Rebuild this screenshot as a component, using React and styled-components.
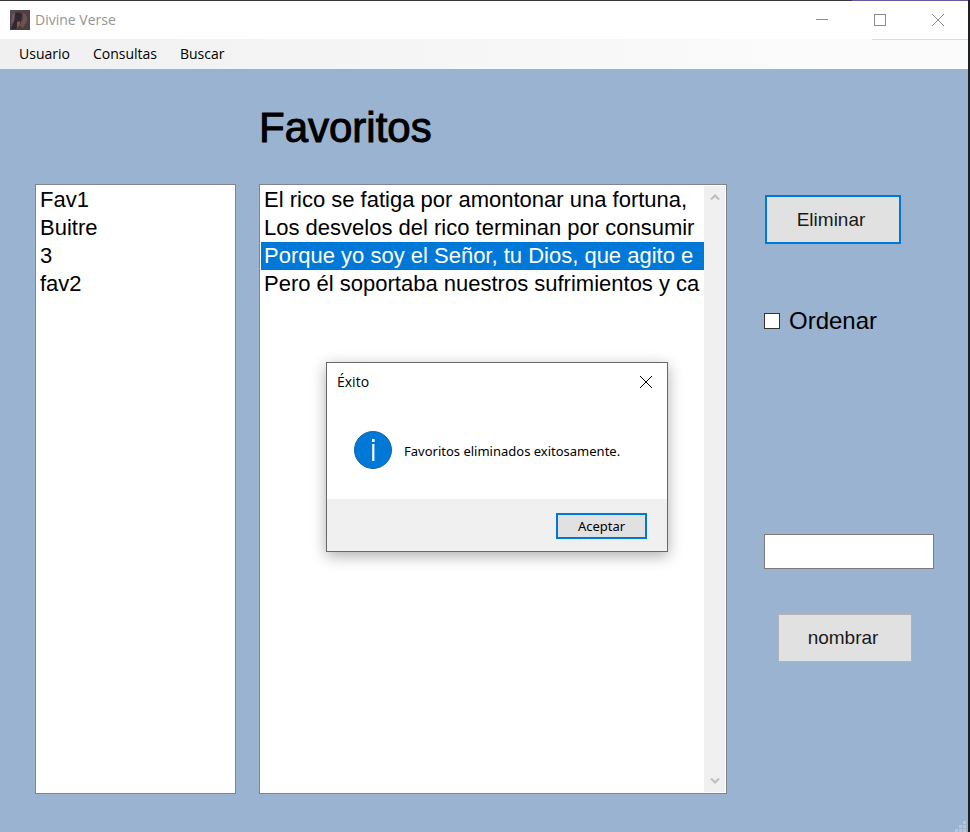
import React from "react";
import styled, { createGlobalStyle } from "styled-components";

const GlobalStyle = createGlobalStyle`
  *, *::before, *::after { box-sizing: border-box; }
  body { margin: 0; background: #1f2023; }
  button, input { font: inherit; color: inherit; }
`;

const sans = `"Liberation Sans", Arial, sans-serif`;
const ui = `"Open Sans", "Segoe UI", sans-serif`;
const uiWide = `"Noto Sans", "Segoe UI", sans-serif`;

const Window = styled.div`
  position: relative;
  display: flex;
  flex-direction: column;
  min-height: 100vh;
  border-right: 2px solid #1f2023;
  background: #99b3d1;
  color: #000;
  font-family: ${sans};
`;

const TopEdge = styled.div`
  height: 1px;
  background: linear-gradient(90deg, #37343a 88%, #66589a 88%);
`;

const TitleBar = styled.header`
  display: flex;
  align-items: center;
  height: 38px;
  padding: 0 1px 0 10px;
  background: #fff;
  color: #949494;
  font: 14px/20px ${ui};
`;

const AppTitle = styled.span`
  flex: 1;
  margin-left: 5px;
`;

const CaptionButton = styled.button`
  display: grid;
  place-items: center;
  width: 58px;
  height: 38px;
  padding: 0;
  border: 0;
  background: none;
  color: #8c8c8c;
`;

const MenuBar = styled.nav`
  display: flex;
  align-items: center;
  gap: 23px;
  height: 30px;
  padding-left: 19px;
  background:
    linear-gradient(#dcdcdc, #dcdcdc) right top / 96px 1px no-repeat,
    linear-gradient(90deg, #f0f0f0, #fbfbfb 85%);
  font: 14px/20px ${ui};
`;

const MenuButton = styled.button`
  padding: 0;
  border: 0;
  background: none;
  color: #000;
`;

const Content = styled.main`
  flex: 1;
  display: grid;
  grid-template-columns: 201px minmax(0, 1fr) 170px;
  grid-template-rows: 115px 1fr;
  column-gap: 23px;
  padding: 0 34px 38px 35px;
`;

const Heading = styled.h1`
  grid-column: 2;
  margin: 0;
  padding-top: 34px;
  font-size: 42px;
  line-height: 50px;
  font-weight: 400;
  -webkit-text-stroke: 1px #000;
`;

const ListFrame = styled.section`
  display: flex;
  grid-row: 2;
  min-width: 0;
  margin-right: ${(p) => (p.$wide ? "14px" : "0")};
  padding: 1px;
  border: 1px solid #7f858d;
  background: #fff;
`;

const List = styled.ul`
  flex: 1;
  min-width: 0;
  margin: 0;
  padding: 0;
  list-style: none;
  font-size: 22px;
  line-height: 28px;
`;

const ListRow = styled.li`
  overflow: hidden;
  padding-left: 3px;
  white-space: nowrap;
  background: ${(p) => (p.$selected ? "#0078d7" : "transparent")};
  color: ${(p) => (p.$selected ? "#fff" : "#000")};
`;

const ScrollTrack = styled.div`
  display: flex;
  flex-direction: column;
  justify-content: space-between;
  width: 21px;
  background: #f0f0f0;
`;

const ScrollButton = styled.button`
  display: grid;
  place-items: center;
  height: 22px;
  padding: 0;
  border: 0;
  background: none;
  color: #bdbdbd;
`;

const Actions = styled.aside`
  display: flex;
  flex-direction: column;
  grid-row: 2;
  align-items: flex-start;
  padding-top: 11px;
`;

const ActionButton = styled.button`
  width: ${(p) => (p.$primary ? "136px" : "134px")};
  height: ${(p) => (p.$primary ? "49px" : "48px")};
  margin-left: ${(p) => (p.$primary ? "1px" : "14px")};
  padding: 0 4px 0 0;
  border: ${(p) => (p.$primary ? "2px solid #0078d7" : "1px solid #b4b4b4")};
  background: #e1e1e1;
  color: #1a1a1a;
  font-size: 19px;
  line-height: 24px;
`;

const CheckLabel = styled.label`
  display: flex;
  align-items: center;
  gap: 9px;
  margin: 62px 0 198px;
  font-size: 24px;
  line-height: 30px;
`;

const CheckBox = styled.input`
  appearance: none;
  width: 16px;
  height: 16px;
  margin: 0;
  border: 1px solid #333;
  background: #fff;

  &:checked {
    background: #0078d7;
  }
`;

const NameInput = styled.input`
  width: 100%;
  height: 35px;
  margin-bottom: 45px;
  padding: 0 6px;
  border: 1px solid #7a7a7a;
  border-radius: 0;
  background: #fff;
  font-size: 22px;
`;

const Grip = styled.svg`
  position: absolute;
  right: 2px;
  bottom: 0;
`;

const Dialog = styled.div`
  position: absolute;
  top: 362px;
  left: 326px;
  width: 342px;
  border: 1px solid #686868;
  background: #fff;
  box-shadow: 0 4px 14px rgba(0, 0, 0, 0.32);
  font: 13px/20px ${uiWide};
`;

const DialogHead = styled.div`
  display: flex;
  align-items: center;
  justify-content: space-between;
  height: 38px;
  padding-left: 10px;
`;

const DialogTitle = styled.h2`
  margin: 0;
  font: 400 14px/20px ${ui};
`;

const DialogClose = styled.button`
  display: grid;
  place-items: center;
  width: 42px;
  height: 38px;
  padding: 0;
  border: 0;
  background: none;
  color: #000;
`;

const DialogBody = styled.div`
  display: flex;
  align-items: center;
  gap: 12px;
  height: 98px;
  padding-left: 27px;
`;

const Message = styled.p`
  margin: 0;
  padding-top: 2px;
  color: #000;
`;

const DialogFoot = styled.div`
  display: flex;
  justify-content: flex-end;
  padding: 14px 20px 12px;
  background: #f0f0f0;
`;

const AcceptButton = styled.button`
  width: 91px;
  height: 26px;
  padding: 0;
  border: 2px solid #0078d7;
  background: #e1e1e1;
  color: #000;
`;

const favorites = ["Fav1", "Buitre", "3", "fav2"];
const verses = [
  "El rico se fatiga por amontonar una fortuna,",
  "Los desvelos del rico terminan por consumir",
  "Porque yo soy el Señor, tu Dios, que agito e",
  "Pero él soportaba nuestros sufrimientos y ca",
];

const AppIcon = () => (
  <svg width="20" height="20" viewBox="0 0 20 20" aria-hidden="true">
    <defs>
      <linearGradient id="portrait" x1="0" y1="0" x2="1" y2="1">
        <stop offset="0" stopColor="#5b4a56" />
        <stop offset="0.5" stopColor="#4f3d42" />
        <stop offset="1" stopColor="#4b3c40" />
      </linearGradient>
    </defs>
    <rect width="20" height="20" fill="url(#portrait)" />
    <path d="M5 3Q9 1 12 4L11 11Q8 13 6 19H1Q5 12 5 3Z" fill="#32262f" />
    <path d="M13 3Q18 5 17 11L13 18L10 15L13 9Z" fill="#695451" />
    <path d="M2 5L5 3L4 11L1 15Z" fill="#6a5a68" />
    <path d="M7 12L10 11L10 15L7 18Z" fill="#8a5446" />
  </svg>
);

const Cross = () => (
  <svg width="12" height="12" viewBox="0 0 12 12" fill="none" stroke="currentColor" aria-hidden="true">
    <path d="M0 0L12 12M12 0L0 12" />
  </svg>
);

const Chevron = ({ down }) => (
  <svg width="10" height="8" viewBox="0 0 10 8" fill="none" stroke="currentColor" strokeWidth="2" aria-hidden="true">
    <path d={down ? "M1 1.5L5 5.5L9 1.5" : "M1 6.5L5 2.5L9 6.5"} />
  </svg>
);

const InfoIcon = () => (
  <svg width="38" height="38" viewBox="0 0 38 38" aria-hidden="true">
    <circle cx="19" cy="19" r="18.5" fill="#0078d7" stroke="#1464a5" />
    <rect x="18" y="8" width="2.6" height="3" fill="#fff" />
    <rect x="18.2" y="13" width="2.2" height="17" fill="#fff" />
  </svg>
);

export default function App() {
  return (
    <>
      <GlobalStyle />
      <Window>
        <TopEdge />
        <TitleBar>
          <AppIcon />
          <AppTitle>Divine Verse</AppTitle>
          <CaptionButton aria-label="Minimizar">
            <svg width="12" height="12" viewBox="0 0 12 12" stroke="currentColor">
              <path d="M0 5.5H12" />
            </svg>
          </CaptionButton>
          <CaptionButton aria-label="Maximizar">
            <svg width="12" height="12" viewBox="0 0 12 12" fill="none" stroke="currentColor">
              <rect x="0.5" y="0.5" width="11" height="11" />
            </svg>
          </CaptionButton>
          <CaptionButton aria-label="Cerrar">
            <Cross />
          </CaptionButton>
        </TitleBar>
        <MenuBar>
          <MenuButton>Usuario</MenuButton>
          <MenuButton>Consultas</MenuButton>
          <MenuButton>Buscar</MenuButton>
        </MenuBar>
        <Content>
          <Heading>Favoritos</Heading>
          <ListFrame>
            <List role="listbox" aria-label="Listas de favoritos">
              {favorites.map((name) => (
                <ListRow key={name} role="option" aria-selected={false}>{name}</ListRow>
              ))}
            </List>
          </ListFrame>
          <ListFrame $wide>
            <List role="listbox" aria-label="Versículos">
              {verses.map((verse, i) => (
                <ListRow key={verse} role="option" aria-selected={i === 2} $selected={i === 2}>{verse}</ListRow>
              ))}
            </List>
            <ScrollTrack>
              <ScrollButton aria-label="Subir"><Chevron /></ScrollButton>
              <ScrollButton aria-label="Bajar"><Chevron down /></ScrollButton>
            </ScrollTrack>
          </ListFrame>
          <Actions>
            <ActionButton $primary>Eliminar</ActionButton>
            <CheckLabel htmlFor="ordenar">
              <CheckBox id="ordenar" type="checkbox" />
              Ordenar
            </CheckLabel>
            <NameInput type="text" aria-label="Nombre" />
            <ActionButton>nombrar</ActionButton>
          </Actions>
        </Content>
        <Grip width="11" height="11" viewBox="0 0 11 11" fill="#bcc5d0" aria-hidden="true">
          <path d="M8 0h3v3h-3zM4 4h3v3h-3zM8 4h3v3h-3zM0 8h3v3h-3zM4 8h3v3h-3zM8 8h3v3h-3z" />
        </Grip>
        <Dialog role="dialog" aria-labelledby="dialog-title">
          <DialogHead>
            <DialogTitle id="dialog-title">Éxito</DialogTitle>
            <DialogClose aria-label="Cerrar"><Cross /></DialogClose>
          </DialogHead>
          <DialogBody>
            <InfoIcon />
            <Message>Favoritos eliminados exitosamente.</Message>
          </DialogBody>
          <DialogFoot>
            <AcceptButton>Aceptar</AcceptButton>
          </DialogFoot>
        </Dialog>
      </Window>
    </>
  );
}
